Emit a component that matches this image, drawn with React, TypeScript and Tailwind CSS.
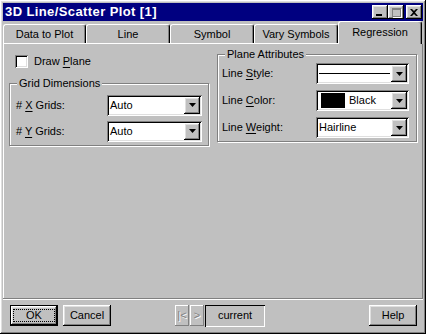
import React from 'react'

const raised =
  'shadow-[inset_-1px_-1px_#000,inset_1px_1px_#fff,inset_-2px_-2px_#808080,inset_2px_2px_#dfdfdf]'

const TABS = ['Data to Plot', 'Line', 'Symbol', 'Vary Symbols', 'Regression']

function Mnemonic({ before, letter, after }: { before: string; letter: string; after: string }) {
  return (
    <span>
      {before}
      <span className="underline underline-offset-[2px]">{letter}</span>
      {after}
    </span>
  )
}

function DropButton() {
  return (
    <div className={`flex h-full w-[16px] shrink-0 items-center justify-center bg-[#c0c0c0] ${raised}`}>
      <svg width="7" height="4" viewBox="0 0 7 4">
        <polygon points="0,0 7,0 3.5,4" fill="#000" />
      </svg>
    </div>
  )
}

function Combo({ className, children }: { className: string; children: React.ReactNode }) {
  return (
    <div
      className={`flex h-[21px] items-center bg-white p-[2px] shadow-[inset_1px_1px_#808080,inset_-1px_-1px_#fff,inset_2px_2px_#000,inset_-2px_-2px_#dfdfdf] ${className}`}
    >
      <div className="flex h-full min-w-0 flex-1 items-center">{children}</div>
      <DropButton />
    </div>
  )
}

function GroupBox({ label, className, children }: { label: string; className: string; children: React.ReactNode }) {
  return (
    <div
      className={`relative border border-[#808080] shadow-[inset_1px_1px_#fff,1px_1px_#fff] ${className}`}
    >
      <span className="absolute left-[7px] top-[-8px] bg-[#c0c0c0] px-[2px] leading-[14px]">{label}</span>
      {children}
    </div>
  )
}

function Row({ label, labelW, children }: { label: React.ReactNode; labelW: string; children: React.ReactNode }) {
  return (
    <div className="flex items-center">
      <div className={labelW}>{label}</div>
      {children}
    </div>
  )
}

function TitleButton({ children }: { children: React.ReactNode }) {
  return (
    <div className={`flex h-[14px] w-[16px] items-center justify-center bg-[#c0c0c0] ${raised}`}>
      {children}
    </div>
  )
}

export default function App() {
  return (
    <div
      className={`flex h-[334px] w-[426px] flex-col bg-[#c0c0c0] p-[3px] text-[11px] text-black ${raised}`}
      style={{ fontFamily: '"Liberation Sans", Arial, sans-serif' }}
    >
      {/* Title bar */}
      <div className="flex h-[18px] shrink-0 items-center bg-[#000080] pl-[2px] pr-[1px]">
        <span className="text-[13px] font-bold tracking-[0.4px] text-white">3D Line/Scatter Plot [1]</span>
        <div className="ml-auto flex items-center">
          <TitleButton>
            <div className="mt-[6px] mr-[3px] h-[2px] w-[6px] bg-black" />
          </TitleButton>
          <TitleButton>
            <div className="h-[9px] w-[9px] border border-t-2 border-[#808080] shadow-[1px_1px_#fff]" />
          </TitleButton>
          <div className="ml-[2px]">
            <TitleButton>
              <svg width="8" height="7" viewBox="0 0 8 7">
                <path d="M0 0h2l2 2 2-2h2L5 3.5 8 7H6L4 5 2 7H0l3-3.5z" fill="#000" />
              </svg>
            </TitleButton>
          </div>
        </div>
      </div>

      {/* Tabs */}
      <div className="flex h-[22px] shrink-0 items-end">
        {TABS.map((t, i) => {
          const sel = t === 'Regression'
          return (
            <div
              key={t}
              className={`relative flex items-center justify-center rounded-t-[3px] border-l border-t border-r border-l-white border-t-white border-r-black bg-[#c0c0c0] shadow-[inset_-1px_0_#808080] ${
                sel ? 'z-10 -mb-[1px] h-[23px] pb-[2px]' : 'h-[19px]'
              } ${i === 0 ? 'w-[83px]' : 'w-[84px]'}`}
            >
              {t}
            </div>
          )
        })}
      </div>

      {/* Panel */}
      <div className="flex flex-1 gap-[8px] border-l border-t border-r border-l-white border-t-white border-r-[#808080] px-[5px] pt-[10px]">
        <div className="flex w-[200px] flex-col">
          <div className="mt-[-1px] flex items-center pl-[6px]">
            <div className="h-[13px] w-[13px] bg-white shadow-[inset_1px_1px_#808080,inset_-1px_-1px_#fff,inset_2px_2px_#000,inset_-2px_-2px_#dfdfdf]" />
            <span className="ml-[6px]">
              <Mnemonic before="Draw " letter="P" after="lane" />
            </span>
          </div>
          <GroupBox label="Grid Dimensions" className="mt-[13px] h-[63px] pl-[6px] pt-[11px]">
            <div className="flex flex-col gap-[5px]">
              <Row labelW="w-[91px]" label={<Mnemonic before="# " letter="X" after=" Grids:" />}>
                <Combo className="w-[95px]">
                  <span className="pl-[1px]">Auto</span>
                </Combo>
              </Row>
              <Row labelW="w-[91px]" label={<Mnemonic before="# " letter="Y" after=" Grids:" />}>
                <Combo className="w-[95px]">
                  <span className="pl-[1px]">Auto</span>
                </Combo>
              </Row>
            </div>
          </GroupBox>
        </div>

        <GroupBox label="Plane Attributes" className="h-[88px] w-[200px] pl-[4px] pt-[8px]">
          <div className="flex flex-col gap-[6px]">
            <Row labelW="w-[94px]" label={<Mnemonic before="Line " letter="S" after="tyle:" />}>
              <Combo className="w-[93px]">
                <div className="mx-[1px] h-[1px] flex-1 bg-black" />
              </Combo>
            </Row>
            <Row labelW="w-[94px]" label={<Mnemonic before="Line " letter="C" after="olor:" />}>
              <Combo className="w-[93px]">
                <div className="ml-[3px] h-[15px] w-[24px] bg-black" />
                <span className="ml-[4px]">Black</span>
              </Combo>
            </Row>
            <Row labelW="w-[94px]" label={<Mnemonic before="Line " letter="W" after="eight:" />}>
              <Combo className="w-[93px]">
                <span className="pl-[1px]">Hairline</span>
              </Combo>
            </Row>
          </div>
        </GroupBox>
      </div>

      {/* Separator */}
      <div className="h-[2px] shrink-0 border-t border-b border-t-[#808080] border-b-white" />

      {/* Bottom buttons */}
      <div className="flex h-[31px] shrink-0 items-center pl-[7px] pr-[6px]">
        <div className="h-[21px] w-[48px] border border-black">
          <div className={`flex h-full items-center justify-center ${raised}`}>
            <span className="border border-dotted border-black px-[12px] leading-[11px]">OK</span>
          </div>
        </div>
        <div className={`ml-[5px] flex h-[21px] w-[48px] items-center justify-center ${raised}`}>Cancel</div>

        <div className="ml-[64px] flex items-center">
          <div className="flex h-[21px] w-[14px] items-center justify-center shadow-[inset_-1px_-1px_#808080,inset_1px_1px_#fff] text-[#808080] [text-shadow:1px_1px_#fff]">
            |&lt;
          </div>
          <div className="ml-[1px] flex h-[21px] w-[14px] items-center justify-center shadow-[inset_-1px_-1px_#808080,inset_1px_1px_#fff] text-[#808080] [text-shadow:1px_1px_#fff]">
            &gt;
          </div>
          <div className="ml-[1px] flex h-[22px] w-[60px] items-center justify-center shadow-[inset_1px_1px_#000,inset_-1px_-1px_#fff]">
            current
          </div>
        </div>

        <div className={`ml-auto flex h-[21px] w-[48px] items-center justify-center ${raised}`}>Help</div>
      </div>
    </div>
  )
}
